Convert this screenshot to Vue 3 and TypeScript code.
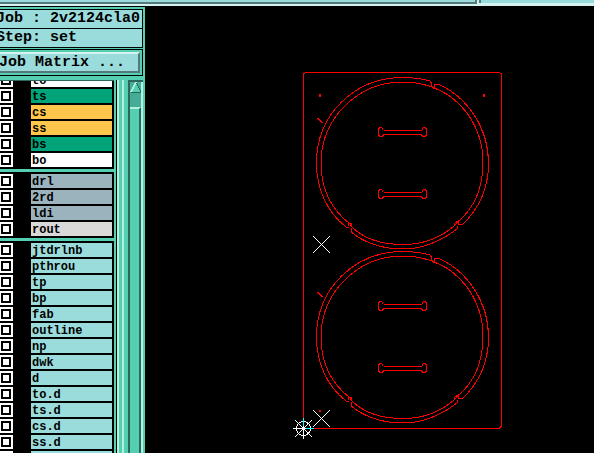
<script setup lang="ts">
interface Layer { name: string; tone: string }

const groups: Layer[][] = [
  [
    { name: 'to', tone: 'white' },
    { name: 'ts', tone: 'green' },
    { name: 'cs', tone: 'amber' },
    { name: 'ss', tone: 'amber' },
    { name: 'bs', tone: 'green' },
    { name: 'bo', tone: 'white' },
  ],
  [
    { name: 'drl', tone: 'slate' },
    { name: '2rd', tone: 'slate' },
    { name: 'ldi', tone: 'slate' },
    { name: 'rout', tone: 'grey' },
  ],
  ['jtdrlnb', 'pthrou', 'tp', 'bp', 'fab', 'outline', 'np', 'dwk', 'd', 'to.d', 'ts.d', 'cs.d', 'ss.d', 'bs.d']
    .map((name) => ({ name, tone: 'aqua' })),
]

const boards = [0, 174]
const slots = [132, 194]
const crosses = [244, 418]
</script>

<template>
  <div class="app">
    <header class="topbar">
      <div class="bar-left"></div>
      <div class="bar-right"></div>
    </header>
    <main class="work">
      <aside class="side">
        <div class="fields">
          <div class="field">Job : 2v2124cla0</div>
          <div class="field">Step: set</div>
        </div>
        <div class="button-frame">
          <button type="button" class="matrix">Job Matrix ...</button>
        </div>
        <div class="list-area">
          <div class="layers">
            <div v-for="(group, g) in groups" :key="g" class="group">
              <label v-for="layer in group" :key="layer.name" class="layer">
                <span class="tick"><input type="checkbox" /></span>
                <span class="name" :class="layer.tone">{{ layer.name }}</span>
              </label>
            </div>
          </div>
          <div class="rails"></div>
          <div class="scroll">
            <svg class="arrow" viewBox="0 0 13 27" shape-rendering="crispEdges">
              <rect width="13" height="27" fill="#45ad96" />
              <rect width="13" height="2" fill="#2b685b" />
              <path d="M1 12 6 2 11 12Z" fill="#54cfb2" />
              <path d="M6 2 11 12H1" fill="none" stroke="#2b685b" stroke-width="1" />
              <path d="M1 12 6 2" stroke="#b4f0df" stroke-width="2" />
              <path d="M11 2h2v25h-2z" fill="#b4f0df" />
            </svg>
            <div class="thumb"></div>
          </div>
        </div>
      </aside>
      <section class="canvas">
        <svg width="449" height="447" viewBox="145 6 449 447" shape-rendering="crispEdges" fill="none">
          <g stroke="#f00" stroke-width="1">
            <path d="M306 72.500H499L501.500 74V426L499 428.500H303.500V74Z" />
            <g v-for="dy in boards" :key="dy" :transform="`translate(0 ${dy})`">
              <path d="M432 87Q418 82 403 82C357 82 321 119 321 163C321 189 332 210 350 224L353 228C366 240 384 244.500 403 244.500C421 244.500 439 239 454 226L458 222C475 207 483 187 483 163C483 125 460 97 432 87" />
              <path d="M434 89 431.500 86V83L430 81Q417 77.500 403 77.500C354 77.500 316.500 115 316.500 163C316.500 189 327 212 346 227L349 227M351 228V232C365 243 383 249 403 249C423 249 441 241 457 229V226M459 224 462 225C480 208 488.500 187 488.500 163C488.500 129 468 97 438 84H435L434 89" />
              <path d="M348 226V223.500H351V226L353 228M454 226V223.500L458 221V224L460 225" />
              <g v-for="y in slots" :key="y" :transform="`translate(0 ${y})`">
                <path d="M383.500 -1.500H421.500M383.500 2.500H421.500M383.500 -1.500 381.500 -4.500H379.500L378.500 -2.500V3.500L380.500 4.500H382.500L383.500 2.500M421.500 -1.500 423.500 -4.500H425.500L426.500 -2.500V3.500L424.500 4.500H422.500L421.500 2.500" />
              </g>
              <path d="M317 118h2v1h1v1h1v1h1v1h1v1h-2v-1h-1v-1h-1v-1h-1v-1h-1z" fill="#f00" stroke="none" />
            </g>
          </g>
          <path d="M319 94h2v3h-2zM483 94h2v3h-2zM319 410h2v2h-2z" fill="#f00" />
          <g stroke="#fff">
            <path v-for="y in crosses" :key="y" :d="`M313 ${y - 8}l17 17m0 -17l-17 17`" />
            <circle cx="303.500" cy="428.500" r="7" />
            <path d="M293 428.500H314M303.500 418V439M295 420l17 17m0 -17l-17 17" />
          </g>
          <path d="M303.500 418V426M306 428.500H314" stroke="#0ff" />
          <rect x="302" y="427" width="3" height="3" fill="#fff" />
        </svg>
      </section>
    </main>
  </div>
</template>

<style>
body { background: #000; }
</style>

<style scoped>
.app {
  height: 100vh;
  display: flex;
  flex-direction: column;
  overflow: hidden;
  background: #000;
  color: #000;
  font-family: "Liberation Mono", monospace;
  font-weight: bold;
}
.topbar { display: flex; gap: 2px; height: 6px; flex: none; background: #d4f2f0; }
.bar-left {
  flex: 478 1 0;
  height: 2px;
  background: #9adcdb;
  border-right: 2px solid #56797b;
  border-bottom: 2px solid #56797b;
}
.bar-right {
  flex: 114 1 0;
  height: 3px;
  background: #9adcdb;
  border-left: 2px solid #56797b;
}
.work { flex: 1; min-height: 0; display: flex; }
.canvas { flex: 1; min-width: 0; overflow: hidden; }
.canvas svg { display: block; }
.side {
  width: 145px;
  flex: none;
  margin-top: 1px;
  display: flex;
  flex-direction: column;
  background: #54cfb2;
  overflow: hidden;
}
.fields { margin: 2px 2px 1px 0; border: 1px solid #000; border-left: 0; background: #000; display: grid; gap: 1px; }
.field {
  height: 18px;
  line-height: 18px;
  font-size: 15px;
  white-space: pre;
  background: #9adcdb;
  text-indent: -4px;
}
.button-frame { margin-right: 2px; padding: 2px 2px 2px 0; border: 1px solid #000; border-left: 0; }
.matrix {
  display: block;
  width: 100%;
  height: 21px;
  padding: 0;
  border: 2px solid;
  border-color: #d4f2f0 #56797b #56797b #d4f2f0;
  border-left: 0;
  background: #9adcdb;
  color: #000;
  font: bold 15px/17px "Liberation Mono", monospace;
  text-align: left;
  text-indent: -1px;
}
.list-area { flex: 1; min-height: 0; display: flex; margin-top: 4px; }
.layers {
  width: 114px;
  flex: none;
  display: flex;
  flex-direction: column;
  justify-content: flex-start;
  overflow: hidden;
  border-top: 1px solid #2b685b;
  background: #000;
}
.group { flex: none; display: grid; gap: 2px; padding: 2px 0; border-bottom: 3px solid #54cfb2; }
.group:first-child { margin-top: -10px; }
.layer { display: grid; grid-template-columns: 13px 81px; column-gap: 18px; height: 14px; }
.tick { display: flex; align-items: center; height: 14px; background: #fff; padding-left: 1px; }
.tick input { appearance: none; width: 10px; height: 10px; margin: 0; border: 2px solid #000; background: #fff; }
.name { height: 14px; padding-left: 1px; font-size: 12px; line-height: 16px; }
.white { background: #fff; }
.green { background: #00a47a; }
.amber { background: #ffc64b; }
.slate { background: #9bb3bd; }
.grey { background: #d9d9d9; }
.aqua { background: #9adcdb; }
.rails {
  width: 14px;
  flex: none;
  background: linear-gradient(to right, #54cfb2 2px, #000 2px 3px, #b4f0df 3px 5px, #54cfb2 5px 8px, #b4f0df 8px 10px, #54cfb2 10px);
}
.scroll {
  flex: 1;
  display: flex;
  flex-direction: column;
  border-left: 2px solid #2b685b;
  background: linear-gradient(to left, #54cfb2 2px, #b4f0df 2px 4px, transparent 4px);
}
.arrow { width: 13px; height: 27px; display: block; flex: none; }
.thumb { width: 9px; flex: 1; border-top: 2px solid #b4f0df; border-right: 2px solid #2b685b; }
</style>
